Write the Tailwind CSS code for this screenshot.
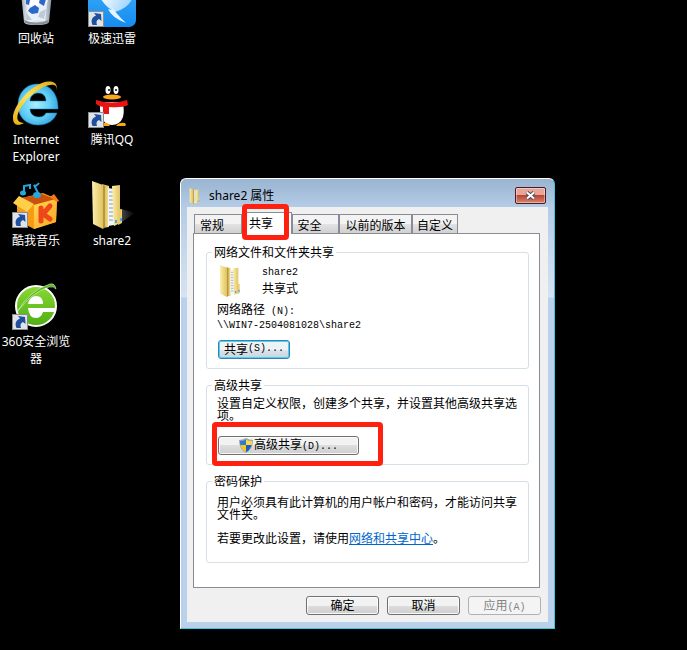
<!DOCTYPE html>
<html lang="zh-CN">
<head>
  <meta charset="UTF-8">
  <meta name="viewport" content="width=device-width, initial-scale=1.0">
  <script src="https://cdn.jsdelivr.net/npm/@tailwindcss/browser@4"></script>
  <title>share2 属性</title>
</head>
<body class="bg-black">

  <!-- Shared drawings: gradients, shortcut arrow, folder -->
  <svg class="absolute h-0 w-0" aria-hidden="true">
    <defs>
      <linearGradient id="folder-light" x1="0" y1="0" x2="1" y2="0">
        <stop offset="0" stop-color="#fdf0ae" />
        <stop offset="1" stop-color="#e0c261" />
      </linearGradient>
      <linearGradient id="folder-dark" x1="0" y1="0" x2="1" y2="0">
        <stop offset="0" stop-color="#c9a945" />
        <stop offset="1" stop-color="#f6e492" />
      </linearGradient>
      <radialGradient id="ie-blue" cx="0.45" cy="0.5" r="0.6">
        <stop offset="0" stop-color="#a5eefd" />
        <stop offset="0.6" stop-color="#5fcdf5" />
        <stop offset="1" stop-color="#2fa0dc" />
      </radialGradient>
      <linearGradient id="ie-ring" x1="0" y1="1" x2="1" y2="0">
        <stop offset="0" stop-color="#e9b010" />
        <stop offset="0.5" stop-color="#ffe25a" />
        <stop offset="1" stop-color="#e0a90c" />
      </linearGradient>
      <linearGradient id="bird-blue" x1="0" y1="0" x2="0" y2="1">
        <stop offset="0" stop-color="#3cb2ff" />
        <stop offset="1" stop-color="#158bee" />
      </linearGradient>
      <linearGradient id="bird-wing" x1="0" y1="0" x2="1" y2="0.3">
        <stop offset="0" stop-color="#fff" />
        <stop offset="1" stop-color="#9dd3fc" />
      </linearGradient>
      <linearGradient id="box-front" x1="0" y1="0" x2="1" y2="1">
        <stop offset="0" stop-color="#ffd95a" />
        <stop offset="1" stop-color="#fba51d" />
      </linearGradient>
      <linearGradient id="green-disc" x1="0" y1="0" x2="0" y2="1">
        <stop offset="0" stop-color="#8ad835" />
        <stop offset="1" stop-color="#4fae15" />
      </linearGradient>
      <linearGradient id="bin-glass" x1="0" y1="0" x2="1" y2="0">
        <stop offset="0" stop-color="#8e9aa8" />
        <stop offset="0.25" stop-color="#eef3f8" />
        <stop offset="0.75" stop-color="#c9d4e0" />
        <stop offset="1" stop-color="#7c8794" />
      </linearGradient>
      <linearGradient id="folder-shadow" x1="0" y1="0" x2="1" y2="0">
        <stop offset="0" stop-color="#555" />
        <stop offset="1" stop-color="#000" />
      </linearGradient>
      <symbol id="shortcut" viewBox="0 0 16 16">
        <rect x="0.5" y="0.5" width="15" height="15" fill="#dfe4e9" stroke="#8d8d8d" />
        <path d="M6 2L13 3L13.500 10L11 8C8.500 9 8 11 9 14L4.500 14C2.500 9.500 4 6 8 4.500Z" fill="#1f4f9e" />
      </symbol>
      <symbol id="folder" viewBox="0 0 34 48">
        <path d="M10 3L17 5V46L10 47Z" fill="url(#folder-dark)" />
        <path d="M16 7L22 8V44L16 45Z" fill="#f4f5f6" />
        <path d="M17 11H21M17 15H21M17 19H21M17 23H21M17 27H21M17 31H21M17 35H21M17 39H21" stroke="#8b98ab" />
        <path d="M20 5L28 4V42L22 45Z" fill="url(#folder-light)" />
        <path d="M22 31L25 29V43L22 45Z" fill="#f3dd86" />
        <path d="M26 29L30 28V42L26 44Z" fill="#e8cb6b" />
        <path d="M23 39H25V42H23ZM28 37H30V40H28Z" fill="#4aa4e8" />
        <path d="M0 0L11 4V48L1 43Z" fill="url(#folder-light)" />
        <path d="M11 4L13 5V46L11 48Z" fill="#b8973c" />
      </symbol>
    </defs>
  </svg>

  <main class="relative min-h-screen overflow-hidden bg-black">

    <!-- Desktop icons -->
    <ul class="-mt-[21px] grid w-[152px] auto-rows-[101px] grid-cols-2 text-center font-['Noto_Sans','Noto_Sans_CJK_SC',sans-serif] text-xs/[17px] text-white">
      <li class="flex flex-col items-center gap-[3px] pr-1">
        <svg class="h-12 w-12 shrink-0" viewBox="0 0 48 48">
          <path d="M8 4H41L37 43Q36 46 24 46Q12 46 12 43Z" fill="url(#bin-glass)" />
          <path d="M12 8L22 15L15 27L20 41L33 42L35 25L39 8Z" fill="#e8eff7" />
          <path d="M14 21L23 17L30 23L22 31Z" fill="#fff" />
          <path d="M18 29l5-3 4 3-1 5-6 1-4-3zM28 19l6 1-2 7-5-3zM14 20l4 1-1 5-3-1z" fill="#2d67c8" />
          <path d="M14 33L20 41H14ZM28 33L34 30L32 40L26 38Z" fill="#bccbdc" />
          <path d="M12 41Q24 46 37 41L36 44Q24 48 13 44Z" fill="#8b8f94" />
        </svg>
        <span>回收站</span>
      </li>
      <li class="flex flex-col items-center gap-[3px] pr-1">
        <svg class="h-12 w-12 shrink-0" viewBox="0 0 48 48">
          <rect width="48" height="48" rx="7" fill="url(#bird-blue)" />
          <path d="M11 17Q24 24 45 18Q41 29 27 33Q18 29 11 17Z" fill="url(#bird-wing)" />
          <path d="M20 22Q27 34 38 44Q24 39 20 30Q23 31 25 31Z" fill="#e8f5ff" />
          <use href="#shortcut" y="32" width="16" height="16" />
        </svg>
        <span>极速迅雷</span>
      </li>

      <li class="flex flex-col items-center gap-[3px] pr-1">
        <svg class="h-12 w-12 shrink-0" viewBox="0 0 48 48">
          <path d="M25 4C37 4 46 13 46 27V29H18C18 34 22 37 27 37C31 37 33 35 34 33H45C42 41 35 45 26 45C14 45 6 37 6 25C6 13 14 4 25 4ZM18 21H34C34 16 31 13 26 13C22 13 18 16 18 21Z" fill="url(#ie-blue)" stroke="#1a80c0" stroke-width="0.500" fill-rule="evenodd" />
          <path d="M44 12C47 4 42-1 30 3C15 9 1 27 1 38C1 46 7 46 12 43C4 43 3 36 10 26C19 12 35 3 42 5C45 6 45 9 44 12Z" fill="url(#ie-ring)" />
        </svg>
        <span>Internet<br>Explorer</span>
      </li>
      <li class="flex flex-col items-center gap-[3px] pr-1">
        <svg class="h-12 w-12 shrink-0" viewBox="0 0 48 48">
          <path d="M13 22Q11 29 13 36Q16 45 24 45Q32 45 35 37Q37 29 34 22Z" fill="#fff" />
          <ellipse cx="20" cy="10" rx="2.500" ry="4" fill="#fff" />
          <ellipse cx="28" cy="10" rx="2.500" ry="4" fill="#fff" />
          <circle cx="21" cy="10" r="1" fill="#000" />
          <circle cx="28" cy="10" r="1" fill="#000" />
          <ellipse cx="24" cy="17" rx="9" ry="2.500" fill="#f6a91b" />
          <path d="M8 20Q24 25 39 20L40 25Q35 28 21 27V34H15V27Q10 26 8 24Z" fill="#e81414" />
          <path d="M14 44Q18 41 22 45L21 46H14ZM28 46Q31 42 37 43L38 45L37 46Z" fill="#f6a91b" />
          <use href="#shortcut" y="32" width="16" height="16" />
        </svg>
        <span>腾讯QQ</span>
      </li>

      <li class="flex flex-col items-center gap-[3px] pr-1">
        <svg class="h-12 w-12 shrink-0" viewBox="0 0 48 48">
          <path d="M5 18L31 12L45 18L44 41L22 48L5 39Z" fill="#f79b17" />
          <path d="M5 18L30 13L43 18L22 24Z" fill="#c9500d" />
          <path d="M22 24L45 18L44 41L22 48Z" fill="url(#box-front)" />
          <path d="M7 15L22 23L15 31L1 22Z" fill="#ffcf4a" />
          <path d="M42 13L47 20L45 21L38 16Z" fill="#f47a14" />
          <path d="M29 27V40M38 25L31 33L38 38" fill="none" stroke="#ee4718" stroke-width="5" stroke-linecap="round" stroke-linejoin="round" />
          <path d="M12 11V5L18 4V8M27 14L22 4Q24 6 27 2" fill="none" stroke="#27a6dc" stroke-width="2" />
          <ellipse cx="11" cy="12" rx="3" ry="2.500" fill="#27a6dc" />
          <ellipse cx="25" cy="14" rx="4" ry="3" fill="#27a6dc" />
          <use href="#shortcut" y="31" width="16" height="16" />
        </svg>
        <span>酷我音乐</span>
      </li>
      <li class="flex flex-col items-center gap-[3px] pr-1">
        <svg class="h-12 w-12 shrink-0" viewBox="0 0 48 48">
          <path d="M30 27L47 32L31 43Z" fill="url(#folder-shadow)" />
          <use href="#folder" x="4" width="34" height="48" />
        </svg>
        <span>share2</span>
      </li>

      <li class="flex flex-col items-center gap-[3px] pr-1">
        <svg class="h-12 w-12 shrink-0" viewBox="0 0 48 48">
          <circle cx="24" cy="24" r="20" fill="url(#green-disc)" stroke="#fff" stroke-width="2" />
          <path d="M16 22Q18 14 24 14Q31 14 31 22ZM16 26H44Q44 29 42 30H31Q29 36 24 36Q17 36 16 26Z" fill="#fff" />
          <path d="M5 30Q18 8 38 2Q43 1 44 7Q42 4 37 5Q20 10 5 30Z" fill="#58b81a" stroke="#fff" stroke-width="0.500" />
          <use href="#shortcut" y="32" width="16" height="16" />
        </svg>
        <span class="w-[72px]">360安全浏览器</span>
      </li>
    </ul>

    <!-- Properties window -->
    <section class="absolute top-[178px] left-[180px] w-[375px] rounded-t-md border border-t-white border-r-[#35c8e0] border-b-[#35c8e0] border-l-white bg-[linear-gradient(#99b4d1,#b4cce6_28px,#d5e3f3_118px,#b9d1ea_119px)] px-[6px] pb-[6px] font-['Noto_Sans_CJK_SC',sans-serif] text-xs/[15px] text-black">
      <header class="flex h-7 items-center gap-[6px] pt-[5px] pl-[2px]">
        <svg class="h-4 w-3" viewBox="0 0 34 48"><use href="#folder" width="34" height="48" /></svg>
        <h1 class="grow pl-[2px] font-['Noto_Sans','Noto_Sans_CJK_SC',sans-serif]">share2 属性</h1>
        <button aria-label="关闭" class="mr-[2px] flex h-[17px] w-[31px] items-center justify-center rounded-xs border border-[#4c1a1f] bg-linear-to-b from-[#e6a699] from-45% via-[#bd4431] via-50% to-[#d4846f] shadow-[inset_0_0_0_1px_#ffffff66]">
          <svg class="h-[9px] w-[11px]" viewBox="0 0 11 9">
            <path d="M2 1.500L9 7.500M9 1.500L2 7.500" stroke="#4b5060" stroke-width="4" />
            <path d="M2 1.500L9 7.500M9 1.500L2 7.500" stroke="#fff" stroke-width="2" />
          </svg>
        </button>
      </header>

      <div class="bg-[#f0f0f0] pt-1 pr-2 pb-[7px] pl-[6px]">
        <div role="tablist" class="flex h-[22px] items-end pl-[1px]">
          <button role="tab" aria-selected="false" class="h-[19px] w-12 border border-b-0 border-[#898c95] bg-linear-to-b from-[#f3f3f3] from-50% via-[#e3e3e3] via-50% to-[#d0d0d0] pr-3">常规</button>
          <div class="relative -mb-px h-[22px]">
            <button role="tab" aria-selected="true" class="h-full w-[50px] border border-b-0 border-[#898c95] bg-white pr-3 pb-[2px]">共享</button>
            <span class="pointer-events-none absolute -top-2 left-0 h-9 w-[47px] rounded-sm border-[5px] border-[#ff2010]"></span>
          </div>
          <button role="tab" aria-selected="false" class="h-[19px] w-[47px] border border-b-0 border-[#898c95] bg-linear-to-b from-[#f3f3f3] from-50% via-[#e3e3e3] via-50% to-[#d0d0d0] pr-3">安全</button>
          <button role="tab" aria-selected="false" class="h-[19px] w-[73px] border border-b-0 border-[#898c95] bg-linear-to-b from-[#f3f3f3] from-50% via-[#e3e3e3] via-50% to-[#d0d0d0]">以前的版本</button>
          <button role="tab" aria-selected="false" class="h-[19px] w-[46px] border border-b-0 border-[#898c95] bg-linear-to-b from-[#f3f3f3] from-50% via-[#e3e3e3] via-50% to-[#d0d0d0]">自定义</button>
        </div>

        <div role="tabpanel" class="flex flex-col gap-2 border border-[#898c95] bg-white pt-[10px] pr-[10px] pb-6 pl-3">
          <fieldset class="rounded-[3px] border border-[#d5dfe5] px-[10px] pb-[9px]">
            <legend class="-ml-[5px] px-[2px] leading-4">网络文件和文件夹共享</legend>
            <div class="flex gap-[19px] pt-[5px] pl-[2px]">
              <svg class="h-8 w-6" viewBox="0 0 34 48"><use href="#folder" width="34" height="48" /></svg>
              <div>
                <p class="font-['Liberation_Mono',monospace] text-[10px]/[15px]">share2</p>
                <p>共享式</p>
              </div>
            </div>
            <p class="pt-1">网络路径<span class="font-['Liberation_Mono',monospace] text-[10px]"> (N):</span></p>
            <p class="font-['Liberation_Mono',monospace] text-[10px]/[14px]">\\WIN7-2504081028\share2</p>
            <button class="mt-[7px] ml-[1px] flex h-[19px] w-[72px] items-center justify-center rounded-[3px] border border-[#3c7fb1] bg-linear-to-b from-[#eef3f6] from-50% via-[#dde5ea] via-50% to-[#c9d4db] pb-[2px] shadow-[inset_0_0_0_1px_#48d1f7]">共享<span class="font-['Liberation_Mono',monospace] text-[10px]">(S)...</span></button>
          </fieldset>

          <fieldset class="rounded-[3px] border border-[#d5dfe5] px-[10px] pb-[9px]">
            <legend class="-ml-[5px] px-[2px] leading-4">高级共享</legend>
            <p class="-mr-[5px] pt-1 leading-3">设置自定义权限，创建多个共享，并设置其他高级共享选项。</p>
            <div class="relative mt-[15px] ml-[1px]">
              <button class="flex h-[19px] w-[141px] items-center justify-center rounded-[3px] border border-[#707070] bg-linear-to-b from-[#f2f2f2] from-50% via-[#dddddd] via-50% to-[#cfcfcf] shadow-[inset_0_0_0_1px_#ffffffcc]">
                <svg class="mr-[1px] h-[15px] w-[14px]" viewBox="0 0 14 15">
                  <path d="M7 0Q10 2 14 2Q14 11 7 15Q0 11 0 2Q4 2 7 0Z" fill="#9aa3ab" />
                  <path d="M7 1.500V7H1.500Q1 5 1 3Q5 3 7 1.500Z" fill="#2b78d8" />
                  <path d="M7 1.500V7H12.500Q13 5 13 3Q9 3 7 1.500Z" fill="#fbdc3f" />
                  <path d="M7 7H1.500Q2.500 11.500 7 14Z" fill="#f7c81e" />
                  <path d="M7 7H12.500Q11.500 11.500 7 14Z" fill="#1c5fc2" />
                </svg>
                <span class="pb-[2px]">高级共享<span class="font-['Liberation_Mono',monospace] text-[10px]">(D)...</span></span>
              </button>
              <span class="pointer-events-none absolute -top-[14px] -left-[6px] h-11 w-[171px] rounded-sm border-[5px] border-[#ff2010]"></span>
            </div>
          </fieldset>

          <fieldset class="rounded-[3px] border border-[#d5dfe5] px-[10px] pb-[17px]">
            <legend class="-ml-[5px] px-[2px] leading-4">密码保护</legend>
            <p class="-mr-[5px] pt-[7px] leading-3">用户必须具有此计算机的用户帐户和密码，才能访问共享文件夹。</p>
            <p class="pt-[10px]">若要更改此设置，请使用<a href="#" class="text-[#0066cc] underline">网络和共享中心</a>。</p>
          </fieldset>
        </div>

        <footer class="-mr-px flex justify-end gap-2 pt-2">
          <button class="h-[19px] w-[73px] rounded-[3px] border border-[#707070] bg-linear-to-b from-[#f2f2f2] from-50% via-[#dddddd] via-50% to-[#cfcfcf] pb-[2px] shadow-[inset_0_0_0_1px_#ffffffcc]">确定</button>
          <button class="h-[19px] w-[73px] rounded-[3px] border border-[#707070] bg-linear-to-b from-[#f2f2f2] from-50% via-[#dddddd] via-50% to-[#cfcfcf] pb-[2px] shadow-[inset_0_0_0_1px_#ffffffcc]">取消</button>
          <button disabled class="h-[19px] w-[73px] rounded-[3px] border border-[#adb2b5] bg-[#f4f4f4] pb-[2px] text-[#838383]">应用<span class="font-['Liberation_Mono',monospace] text-[10px]">(A)</span></button>
        </footer>
      </div>
    </section>
  </main>

</body>
</html>
